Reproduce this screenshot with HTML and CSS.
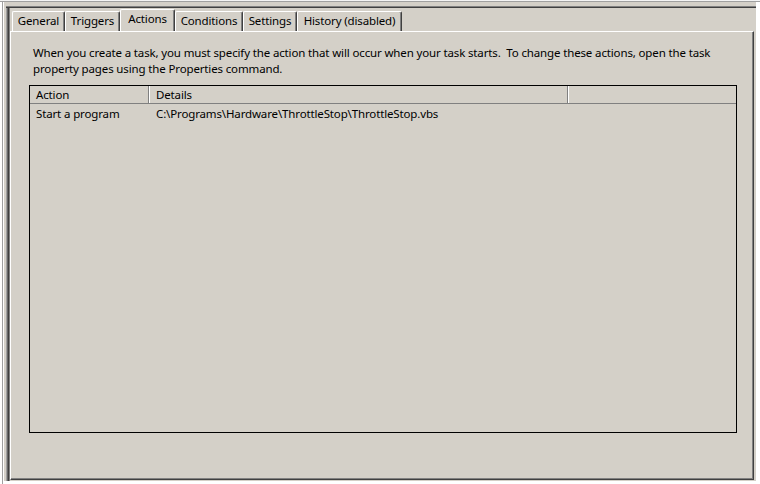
FILE: index.html
```html
<!DOCTYPE html>
<html>
<head>
<meta charset="utf-8">
<title>Actions</title>
<link rel="stylesheet" href="styles.css">
</head>
<body>
<div class="win">
  <div class="well">
    <div class="tabctl">
      <div class="tabstrip">
        <div class="tab w-general">General</div>
        <div class="tab w-triggers">Triggers</div>
        <div class="tab tab-sel w-actions">Actions</div>
        <div class="tab w-conditions">Conditions</div>
        <div class="tab w-settings">Settings</div>
        <div class="tab w-history">History (disabled)</div>
      </div>
      <div class="panel">
        <p class="desc">When you create a task, you must specify the action that will occur when your task starts.&nbsp; To change these actions, open the task<br>property pages using the Properties command.</p>
        <div class="list">
          <div class="lhead">
            <div class="hc c1">Action</div>
            <div class="hc c2">Details</div>
            <div class="hc c3"></div>
          </div>
          <div class="lrow">
            <div class="rc c1">Start a program</div>
            <div class="rc c2">C:\Programs\Hardware\ThrottleStop\ThrottleStop.vbs</div>
            <div class="rc c3"></div>
          </div>
        </div>
      </div>
    </div>
  </div>
</div>
</body>
</html>
```
FILE: styles.css
```css
html, body {
  margin: 0;
  padding: 0;
  background: #ffffff;
}
body {
  font-family: "Noto Sans", "Open Sans", sans-serif;
  font-size: 11.5px;
  letter-spacing: -0.14px;
  color: #000;
}
.win {
  width: 760px;
  height: 484px;
  box-sizing: border-box;
  background: #d4d0c8;
  padding: 6px 4px 3px 6px;
  box-shadow:
    inset 0 1px #f4f4f4,
    inset 0 2px #a0a0a0,
    inset 2px 0 #ffffff,
    inset 3px 0 #a0a0a0,
    inset 4px 0 #ffffff,
    inset -4px 0 #ffffff,
    inset 0 -3px #ffffff;
}
.well {
  height: 100%;
  box-sizing: border-box;
  padding: 2px 2px 1px 4px;
  box-shadow:
    inset 0 1px #808080,
    inset 0 2px #404040,
    inset 1px 0 #a0a0a0,
    inset 2px 0 #696969,
    inset 3px 0 #404040,
    inset 4px 0 #808080;
}
.tabctl {
  height: 100%;
  display: flex;
  flex-direction: column;
}
.tabstrip {
  height: 23px;
  flex: none;
  display: flex;
  align-items: flex-end;
  padding-left: 2px;
}
.tab {
  box-sizing: border-box;
  height: 20px;
  padding-top: 1px;
  line-height: 16px;
  text-align: center;
  white-space: nowrap;
  border-top: 1px solid #ffffff;
  border-left: 1px solid #ffffff;
  border-right: 1px solid #404040;
  border-top-left-radius: 2px;
  border-top-right-radius: 2px;
  box-shadow: inset -1px 0 #808080;
  background: #d4d0c8;
}
.tab-sel {
  height: 23px;
  margin-bottom: -1px;
  padding-top: 1px;
  line-height: 16px;
}
.w-general { width: 53px; }
.w-triggers { width: 55px; }
.w-actions { width: 55px; }
.w-conditions { width: 68px; }
.w-settings { width: 54px; }
.w-history { width: 105px; }

.panel {
  flex: 1;
  box-sizing: border-box;
  border-top: 1px solid #ffffff;
  border-left: 1px solid #ffffff;
  border-right: 1px solid #404040;
  border-bottom: 1px solid #404040;
  box-shadow: inset -1px -1px #808080;
  padding: 13px 0 0 18px;
}
.desc {
  margin: 0 0 8px 4px;
  line-height: 16px;
  white-space: nowrap;
}
.list {
  width: 708px;
  height: 348px;
  box-sizing: border-box;
  border: 1px solid #000;
}
.lhead,
.lrow {
  display: grid;
  grid-template-columns: 119px 419px 1fr;
}
.lhead {
  border-bottom: 1px solid #808080;
}
.hc {
  height: 17px;
  box-sizing: border-box;
  padding-top: 1px;
  line-height: 15px;
  padding-left: 6px;
  white-space: nowrap;
}
.hc.c1 { border-right: 1px solid #808080; }
.hc.c2 { border-left: 1px solid #ffffff; border-right: 1px solid #808080; }
.hc.c3 { border-left: 1px solid #ffffff; }
.rc {
  padding-top: 1px;
  line-height: 17px;
  padding-left: 6px;
  white-space: nowrap;
}
.rc.c2 { padding-left: 7px; }
```
